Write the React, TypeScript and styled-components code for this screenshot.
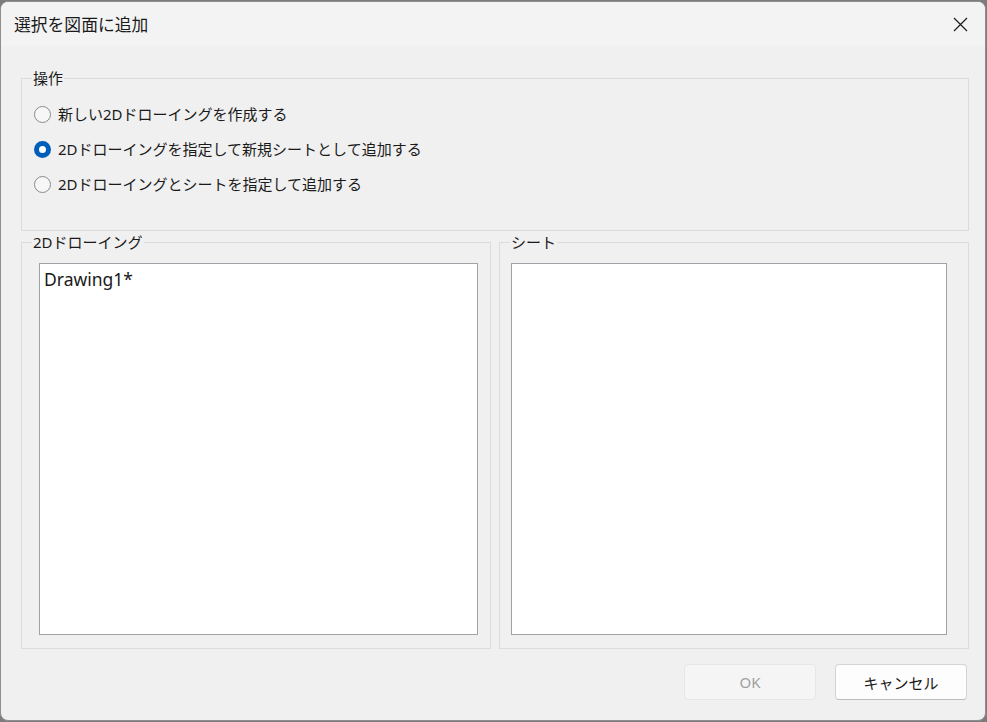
import { FC, ReactNode } from "react"
import styled, { createGlobalStyle } from "styled-components"

const GlobalStyle = createGlobalStyle`
  html, body {
    margin: 0;
    padding: 0;
    background: #7c7c7c;
  }
  body {
    font-family: "Noto Sans", "Noto Sans CJK JP", sans-serif;
    color: #1a1a1a;
  }
`

const CloseIcon: FC = () => (
  <svg width="15" height="15" viewBox="0 0 15 15">
    <path d="M1 1 L14 14 M14 1 L1 14" stroke="#1b1b1b" strokeWidth="1.2" fill="none" />
  </svg>
)

const Group: FC<{
  label: string
  pad: string
  children: ReactNode
}> = ({ label, pad, children }) => (
  <Box $pad={pad}>
    <Legend>{label}</Legend>
    {children}
  </Box>
)

const Radio: FC<{ checked?: boolean; children: ReactNode }> = ({
  checked,
  children,
}) => (
  <RadioRow>
    <Circle $checked={checked} />
    <span>{children}</span>
  </RadioRow>
)

const App: FC = () => {
  return (
    <>
      <GlobalStyle />
      <Window>
        <TitleBar>
          <Title>選択を図面に追加</Title>
          <CloseIcon />
        </TitleBar>
        <Body>
          <Group label="操作" pad="23px 12px">
            <Options>
              <Radio>新しい2Dドローイングを作成する</Radio>
              <Radio checked>2Dドローイングを指定して新規シートとして追加する</Radio>
              <Radio>2Dドローイングとシートを指定して追加する</Radio>
            </Options>
          </Group>
          <Columns>
            <Group label="2Dドローイング" pad="20px 12px 13px 17px">
              <ListBox>
                <Item>Drawing1*</Item>
              </ListBox>
            </Group>
            <Group label="シート" pad="20px 21px 13px 11px">
              <ListBox />
            </Group>
          </Columns>
          <Buttons>
            <Button disabled>OK</Button>
            <Button>キャンセル</Button>
          </Buttons>
        </Body>
      </Window>
    </>
  )
}

const Window = styled.div`
  margin-top: 1px;
  width: 986px;
  height: 720px;
  box-sizing: border-box;
  border: 1px solid #8e8e8e;
  border-radius: 8px;
  background: #f0f0f0;
  overflow: hidden;
  display: flex;
  flex-direction: column;
`

const TitleBar = styled.div`
  height: 44px;
  flex: none;
  background: #f3f3f3;
  display: flex;
  align-items: center;
  justify-content: space-between;
  padding: 0 17px 0 13px;
`

const Title = styled.div`
  font-family: "Noto Sans CJK JP", sans-serif;
  font-size: 16.8px;
  line-height: 20px;
  color: #1a1a1a;
`

const Body = styled.div`
  flex: 1;
  display: flex;
  flex-direction: column;
  padding: 32px 16px 20px 20px;
`

const Box = styled.div<{ $pad: string }>`
  position: relative;
  border: 1px solid #dcdcdc;
  padding: ${({ $pad }) => $pad};
  display: flex;
  flex-direction: column;
`

const Legend = styled.div`
  position: absolute;
  top: -11px;
  left: 10px;
  padding: 0 1px;
  background: #f0f0f0;
  font-size: 15px;
  line-height: 20px;
  color: #1a1a1a;
`

const Options = styled.div`
  display: flex;
  flex-direction: column;
  gap: 11px;
  height: 105px;
`

const RadioRow = styled.div`
  display: flex;
  align-items: center;
  gap: 7px;
  height: 24px;
  font-size: 15px;
  line-height: 20px;
`

const Circle = styled.div<{ $checked?: boolean }>`
  width: 17px;
  height: 17px;
  box-sizing: border-box;
  border-radius: 50%;
  flex: none;
  border: ${({ $checked }) =>
    $checked ? "5px solid #005fb8" : "1px solid #8a8a8a"};
  background: ${({ $checked }) => ($checked ? "#ffffff" : "#f7f7f7")};
`

const Columns = styled.div`
  margin-top: 11px;
  height: 407px;
  display: grid;
  grid-template-columns: 1fr 1fr;
  gap: 8px;

  & > div {
    box-sizing: border-box;
  }
`

const ListBox = styled.div`
  flex: 1;
  background: #ffffff;
  border: 1px solid #9fa3a8;
  padding: 3px 4px;
`

const Item = styled.div`
  font-size: 17.5px;
  line-height: 24px;
  color: #1a1a1a;
`

const Buttons = styled.div`
  margin-top: 15px;
  display: flex;
  justify-content: flex-end;
  gap: 19px;
  padding-right: 2px;
`

const Button = styled.button`
  width: 132px;
  height: 36px;
  box-sizing: border-box;
  border-radius: 4px;
  font-family: "Noto Sans", "Noto Sans CJK JP", sans-serif;
  font-size: 15px;
  border: 1px solid #d4d4d4;
  border-bottom-color: #bdbdbd;
  background: #fdfdfd;
  color: #1a1a1a;

  &:disabled {
    background: #f5f5f5;
    border-color: #e6e6e6;
    color: #a0a0a0;
  }
`

export default App
